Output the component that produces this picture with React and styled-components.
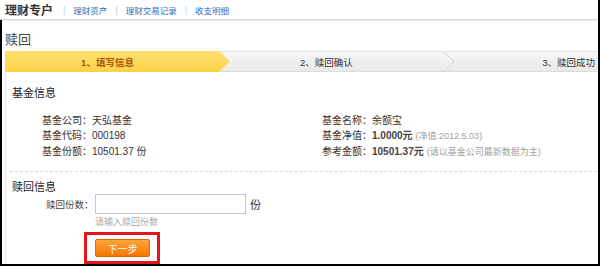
import React from 'react'
import styled, { createGlobalStyle } from 'styled-components'

const GlobalStyle = createGlobalStyle`
  html, body {
    margin: 0;
    padding: 0;
    background: #fff;
  }
  body {
    font-family: 'Liberation Sans', 'Noto Sans CJK SC', sans-serif;
    color: #333;
  }
`

const Frame = styled.div`
  width: 600px;
  height: 266px;
  box-sizing: border-box;
  border-right: 2px solid #000;
  border-bottom: 2px solid #000;
  overflow: hidden;
  display: flex;
  flex-direction: column;
`

const Header = styled.div`
  height: 19px;
  flex-shrink: 0;
  display: flex;
  align-items: center;
  gap: 8px;
  padding-left: 5px;
  border-bottom: 1px solid #d9d9d9;
  box-shadow: 0 1px 0 #efefef;
`

const Brand = styled.span`
  font-size: 12px;
  font-weight: bold;
  color: #333;
  margin-right: 2px;
`

const Sep = styled.span`
  font-size: 9px;
  color: #c8c8c8;
`

const NavLink = styled.a`
  font-size: 8.5px;
  color: #2a6ebb;
  text-decoration: none;
`

const Section = styled.div`
  flex: 1;
  display: flex;
  flex-direction: column;
  border-left: 2px solid #000;
  padding-left: 3px;
`

const PageTitle = styled.div`
  font-size: 13px;
  line-height: 16px;
  color: #444;
  padding-top: 12px;
  margin-bottom: 3px;
`

const StepBar = styled.div`
  height: 21px;
  display: flex;
  box-sizing: border-box;
  background: linear-gradient(#f6f6f6, #e9e9e9);
  border-top: 1px solid #e2e2e2;
  border-bottom: 1px solid #dcdcdc;
  flex-shrink: 0;
`

const ActiveStep = styled.div`
  width: 225px;
  margin: -1px 0;
  display: flex;
  align-items: center;
  justify-content: center;
  padding-right: 20px;
  box-sizing: border-box;
  background: linear-gradient(#ffe06c, #fdd24a);
  clip-path: polygon(0 0, 214px 0, 225px 50%, 214px 100%, 0 100%);
  font-size: 9.5px;
  font-weight: bold;
  color: #a8540a;
`

const Step = styled.div`
  flex: ${p => (p.$last ? 1 : 'none')};
  width: ${p => (p.$last ? 'auto' : '227px')};
  display: flex;
  align-items: center;
  justify-content: ${p => (p.$last ? 'flex-end' : 'space-between')};
  padding-left: ${p => (p.$last ? 0 : '70px')};
  padding-right: ${p => (p.$last ? '3px' : 0)};
  box-sizing: border-box;
  font-size: 9.5px;
  color: #333;
`

const Chevron = () => (
  <svg width='14' height='19' viewBox='0 0 14 19'>
    <polyline points='0,0 11,9.5 0,19' fill='none' stroke='#d2d2d2' strokeWidth='1' />
    <polyline points='-1.5,0 9.5,9.5 -1.5,19' fill='none' stroke='#fff' strokeWidth='1' />
  </svg>
)

const Panel = styled.div`
  flex: 1;
  border-left: 1px solid #e8e8e8;
  padding-left: 6px;
  display: flex;
  flex-direction: column;
`

const BlockTitle = styled.div`
  font-size: 11px;
  line-height: 14px;
  color: #222;
  margin-top: ${p => p.$top || 0}px;
`

const InfoGrid = styled.div`
  display: grid;
  grid-template-columns: 280px 1fr;
  padding-left: 30px;
  margin-top: 13px;
  font-size: 10px;
  line-height: 15px;
  color: #333;
`

const Strong = styled.span`
  font-weight: bold;
  color: #444;
`

const Note = styled.span`
  font-size: 9px;
  color: #a0a0a0;
  margin-left: 3px;
`

const Dashed = styled.div`
  margin: 11px 1px 0 -2px;
  border-top: 1px dashed #d8d8d8;
`

const FormRow = styled.div`
  display: flex;
  align-items: center;
  padding-left: 34px;
  font-size: 11px;
  color: #333;
`

const Label = styled.span`
  width: 49px;
  white-space: nowrap;
  font-size: 9.5px;
  color: #444;
`

const Input = styled.input`
  width: 151px;
  height: 20px;
  box-sizing: border-box;
  border: 1px solid #c8c8c8;
  margin: 0;
  padding: 0 4px;
  outline: none;
`

const Unit = styled.span`
  margin-left: 4px;
`

const Hint = styled.div`
  margin-left: 83px;
  font-size: 9px;
  line-height: 12px;
  margin-top: 2px;
  color: #aaa;
`

const Highlight = styled.div`
  align-self: flex-start;
  margin: 4px 0 0 72px;
  border: 3px solid #e0171b;
  padding: 4px 7px 4px 8px;
`

const NextButton = styled.button`
  display: block;
  width: 55px;
  height: 18px;
  border: 1px solid #e06a00;
  border-radius: 2px;
  background: linear-gradient(#ffa43a, #f57500);
  color: #fff;
  font-family: 'Liberation Sans', 'Noto Sans CJK SC', sans-serif;
  font-size: 10px;
  padding: 0;
`

export default function App () {
  return (
    <Frame>
      <GlobalStyle />
      <Header>
        <Brand>理财专户</Brand>
        <Sep>|</Sep>
        <NavLink href='#'>理财资产</NavLink>
        <Sep>|</Sep>
        <NavLink href='#'>理财交易记录</NavLink>
        <Sep>|</Sep>
        <NavLink href='#'>收支明细</NavLink>
      </Header>
      <Section>
        <PageTitle>赎回</PageTitle>
        <StepBar>
          <ActiveStep>1、填写信息</ActiveStep>
          <Step>
            <span>2、赎回确认</span>
            <Chevron />
          </Step>
          <Step $last>3、赎回成功</Step>
        </StepBar>
        <Panel>
          <BlockTitle $top={14}>基金信息</BlockTitle>
          <InfoGrid>
            <div>基金公司：天弘基金</div>
            <div>基金名称：余额宝</div>
            <div>基金代码：000198</div>
            <div>基金净值：<Strong>1.0000元</Strong><Note>(净值:2012.5.03)</Note></div>
            <div>基金份额：10501.37 份</div>
            <div>参考金额：<Strong>10501.37元</Strong><Note>(请以基金公司最新数据为主)</Note></div>
          </InfoGrid>
          <Dashed />
          <BlockTitle $top={8}>赎回信息</BlockTitle>
          <FormRow>
            <Label>赎回份数：</Label>
            <Input type='text' />
            <Unit>份</Unit>
          </FormRow>
          <Hint>请输入赎回份数</Hint>
          <Highlight>
            <NextButton type='button'>下一步</NextButton>
          </Highlight>
        </Panel>
      </Section>
    </Frame>
  )
}
